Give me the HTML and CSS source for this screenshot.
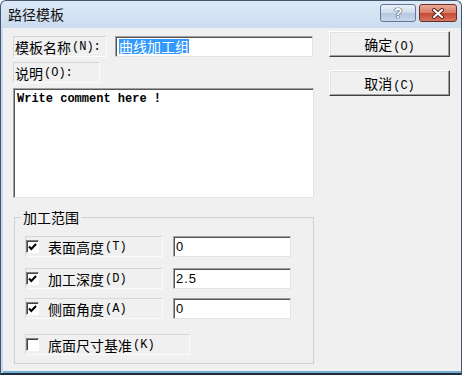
FILE: index.html
```html
<!DOCTYPE html>
<html lang="zh">

<head>
    <meta charset="utf-8">
    <title>路径模板</title>
    <link rel="stylesheet" href="styles.css">
</head>

<body>
    <div class="window">
        <div class="titlebar">
            <span class="title">路径模板</span>
            <div class="caption-buttons">
                <div class="cap-btn help">?</div>
                <div class="cap-btn close">
                    <svg width="14" height="11" viewBox="0 0 14 11">
                        <path d="M3 2 L11 9 M11 2 L3 9" stroke="#5a2016" stroke-width="4" stroke-linecap="round" />
                        <path d="M3 2 L11 9 M11 2 L3 9" stroke="#fff" stroke-width="2.2" stroke-linecap="round" />
                    </svg>
                </div>
            </div>
        </div>

        <div class="client">
            <div class="left">
                <div class="row">
                    <div class="static name-label">模板名称<span class="key">(N):</span></div>
                    <div class="edit name-edit"><span class="sel">曲线加工组</span></div>
                </div>
                <div class="static desc-label">说明<span class="key">(O):</span></div>
                <div class="edit memo">Write comment here !</div>

                <fieldset class="group">
                    <legend>加工范围</legend>
                    <div class="opt-row first">
                        <div class="static check">
                            <span class="box"><svg width="9" height="8" viewBox="0 0 9 8"><path d="M1 3.5 L3.3 6 L8 1" stroke="#000" stroke-width="2" fill="none" /></svg></span>表面高度<span class="key">(T)</span>
                        </div>
                        <div class="edit value">0</div>
                    </div>
                    <div class="opt-row second">
                        <div class="static check">
                            <span class="box"><svg width="9" height="8" viewBox="0 0 9 8"><path d="M1 3.5 L3.3 6 L8 1" stroke="#000" stroke-width="2" fill="none" /></svg></span>加工深度<span class="key">(D)</span>
                        </div>
                        <div class="edit value">2.5</div>
                    </div>
                    <div class="opt-row third">
                        <div class="static check">
                            <span class="box"><svg width="9" height="8" viewBox="0 0 9 8"><path d="M1 3.5 L3.3 6 L8 1" stroke="#000" stroke-width="2" fill="none" /></svg></span>侧面角度<span class="key">(A)</span>
                        </div>
                        <div class="edit value">0</div>
                    </div>
                    <div class="opt-row last">
                        <div class="static check wide">
                            <span class="box"></span>底面尺寸基准<span class="key">(K)</span>
                        </div>
                    </div>
                </fieldset>
            </div>

            <div class="right">
                <button class="btn">确定<span class="key">(O)</span></button>
                <button class="btn">取消<span class="key">(C)</span></button>
            </div>
        </div>
    </div>
</body>

</html>
```

FILE: styles.css
```css
* {
    box-sizing: border-box;
    margin: 0;
    padding: 0;
}

body {
    background: #fff;
    font-family: "Noto Sans CJK SC", sans-serif;
    font-size: 14px;
    color: #000;
}

.window {
    width: 462px;
    height: 375px;
    display: flex;
    flex-direction: column;
    border: 1px solid #44566b;
    border-bottom: 2px solid #1e2e3e;
    border-radius: 6px 6px 0 0;
    background: linear-gradient(#dce8f6, #c4d7ee 40px, #c4d7ee);
}

.titlebar {
    height: 27px;
    display: flex;
    justify-content: space-between;
    padding: 0 4px 0 7px;
}

.title {
    line-height: 26px;
    color: #111;
}

.caption-buttons {
    display: flex;
    gap: 3px;
    margin-top: 3px;
}

.cap-btn {
    height: 18px;
    border: 1px solid #60779a;
    border-radius: 3px;
    display: flex;
    align-items: center;
    justify-content: center;
}

.help {
    width: 36px;
    background: linear-gradient(#eaf1f9, #cddbec 50%, #b4c7df 51%, #c9d9ec);
    color: #fff;
    font-family: "Liberation Sans", sans-serif;
    font-weight: bold;
    font-size: 14px;
    text-shadow: 0 0 1px #33465e, 0 0 1px #33465e, 0 0 1px #33465e;
}

.close {
    width: 38px;
    border-color: #6e2d22;
    background: linear-gradient(#e9a998, #d87b66 50%, #c44a32 51%, #d57660);
}

.client {
    flex: 1;
    display: flex;
    margin-left: 2px;
    padding: 3px 0 0 10px;
    background: #f0f0f0;
    border-bottom: 2px solid #74aed0;
}

.left {
    width: 301px;
    padding-top: 5px;
}

.right {
    margin-left: 15px;
    display: flex;
    flex-direction: column;
    gap: 13px;
}

.row {
    display: flex;
    gap: 8px;
}

.static {
    height: 21px;
    display: flex;
    align-items: center;
    padding-left: 1px;
    border: 1px solid;
    border-color: #d6d6d6 #fbfbfb #fbfbfb #d6d6d6;
    white-space: nowrap;
}

.key {
    font-family: "Liberation Mono", monospace;
    font-size: 12px;
    margin-left: 1px;
}

.name-label {
    width: 94px;
}

.desc-label {
    width: 87px;
    margin-top: 5px;
}

.edit {
    background: #fff;
    border: 1px solid;
    border-color: #a0a0a0 #e3e3e3 #e3e3e3 #a0a0a0;
    box-shadow: inset 1px 1px #555;
}

.name-edit {
    width: 198px;
    height: 21px;
    display: flex;
    align-items: center;
    padding-left: 3px;
}

.sel {
    background: #3399ff;
    color: #fff;
    line-height: 15px;
}

.memo {
    width: 301px;
    height: 110px;
    margin-top: 5px;
    padding: 3px 3px;
    font-family: "Liberation Mono", monospace;
    font-size: 12px;
    font-weight: bold;
    line-height: 14px;
    white-space: pre;
}

.group {
    width: 300px;
    height: 155px;
    margin: 11px 0 0 1px;
    border: 1px solid #cbd1d6;
}

.group legend {
    margin-left: 6px;
    padding: 0 2px;
    line-height: 16px;
}

.opt-row {
    display: flex;
    gap: 10px;
    margin-left: 10px;
}

.opt-row.first {
    margin-top: 11px;
}

.opt-row.second {
    margin-top: 11px;
}

.opt-row.third {
    margin-top: 9px;
}

.opt-row.last {
    margin-top: 15px;
}

.check {
    width: 138px;
    padding-left: 0;
}

.check.wide {
    width: 165px;
}

.box {
    width: 13px;
    height: 13px;
    margin-right: 9px;
    display: flex;
    align-items: center;
    justify-content: center;
    background: #fff;
    border: 1px solid;
    border-color: #808080 #fff #fff #808080;
    box-shadow: inset 1px 1px #404040;
}

.value {
    width: 118px;
    height: 21px;
    display: flex;
    align-items: center;
    padding-left: 2px;
    font-family: "Liberation Sans", sans-serif;
    font-size: 13px;
    letter-spacing: 1px;
}

.btn {
    width: 121px;
    height: 26px;
    background: #f0f0f0;
    border: 1px solid;
    border-color: #fff #404040 #404040 #fff;
    box-shadow: inset -1px -1px #a0a0a0, inset 1px 1px #e3e3e3;
    font-family: "Noto Sans CJK SC", sans-serif;
    font-size: 14px;
    color: #000;
}
```
